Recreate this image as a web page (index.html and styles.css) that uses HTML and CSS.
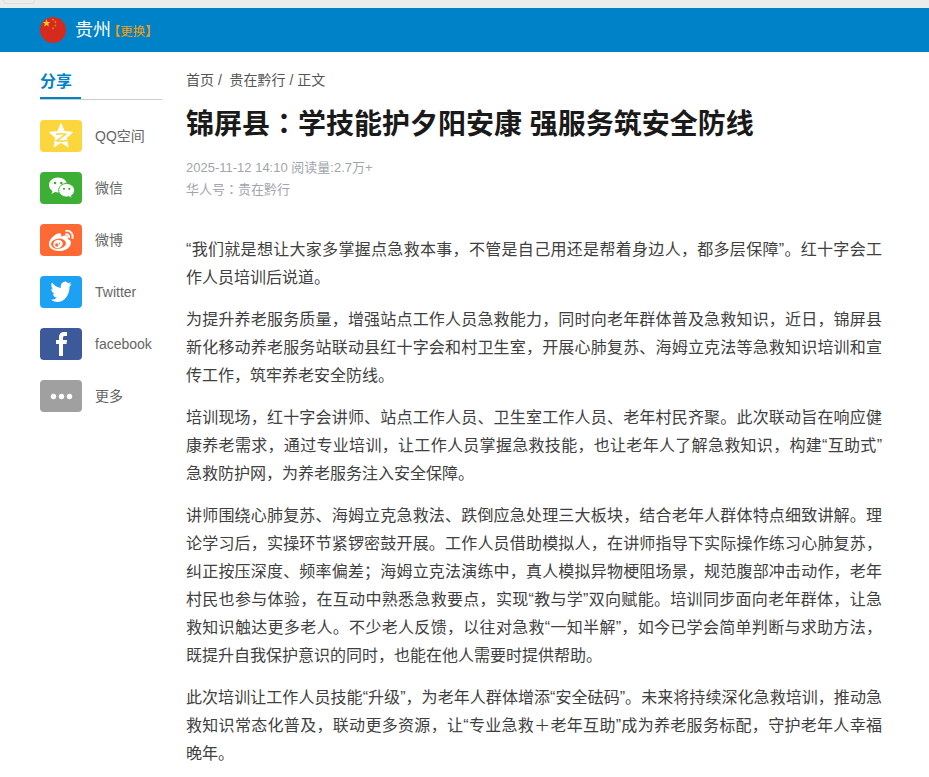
FILE: index.html
```
<!DOCTYPE html>
<html lang="zh-CN">
<head>
  <meta charset="UTF-8">
  <meta name="viewport" content="width=device-width, initial-scale=1.0">
  <title>锦屏县：学技能护夕阳安康 强服务筑安全防线</title>
  <link rel="stylesheet" href="styles.css">
</head>
<body>
  <div class="top-strip"><div class="top-tab"></div></div>
  <header class="header">
    <svg class="flag" viewBox="0 0 26 26">
      <circle cx="13" cy="13" r="13" fill="#d52b1e"/>
      <path fill="#f8c51c" d="M6.500 2.300l1.100 2.600 2.800.2-2.200 1.700.8 2.700-2.500-1.500-2.300 1.500.7-2.700-2.200-1.700 2.800-.2z"/>
      <g fill="#e8931c">
        <circle cx="13" cy="2.600" r=".9"/>
        <circle cx="15.400" cy="5" r=".9"/>
        <circle cx="15.400" cy="8.600" r=".9"/>
        <circle cx="13" cy="11.300" r=".9"/>
      </g>
    </svg>
    <span class="city">贵州</span>
    <a class="change">【更换】</a>
  </header>

  <div class="main">
    <aside class="share">
      <div class="share-title"><span>分享</span></div>
      <ul class="share-list">
        <li>
          <svg class="icon qzone" viewBox="0 0 42 32">
            <path fill="#fff" stroke="#fff" stroke-width="1" stroke-linejoin="round" d="M21 3.500l3.300 8 8.200.8-6.200 5.600 1.800 9-7.100-4.600-7.100 4.600 1.800-9-6.200-5.600 8.200-.8z"/>
            <path fill="none" stroke="#fbd63c" stroke-width="1.500" d="M15.800 14.300q5-1 9.800 0l-8.800 6.400q5 1 10.400-.3"/>
          </svg>
          <span>QQ空间</span>
        </li>
        <li>
          <svg class="icon wechat" viewBox="0 0 42 32">
            <path fill="#fff" d="M18 5.500c-5 0-9 3.300-9 7.400 0 2.400 1.300 4.400 3.400 5.800l-.8 3.200 3.300-1.900c1 .3 2 .4 3.100.4 5 0 9-3.300 9-7.500s-4-7.400-9-7.400z"/>
            <path fill="#fff" stroke="#3eaf35" stroke-width="1" d="M26.600 11.500c-4.400 0-7.900 3-7.900 6.700s3.500 6.800 7.900 6.800c.9 0 1.700-.1 2.500-.3l3 1.900-.7-2.900c1.900-1.200 3.100-3.200 3.100-5.500 0-3.700-3.500-6.700-7.900-6.700z"/>
            <g fill="#3eaf35">
              <circle cx="15" cy="11" r="1.300"/>
              <circle cx="21.300" cy="11" r="1.300"/>
              <circle cx="24" cy="16.800" r="1.100"/>
              <circle cx="29.300" cy="16.800" r="1.100"/>
            </g>
          </svg>
          <span>微信</span>
        </li>
        <li>
          <svg class="icon weibo" viewBox="0 0 42 32">
            <path fill="#fff" d="M19.600 9.200c1.800.1 2 1.600 1.400 3.500 3-1.300 6.600-1.800 7 .4.1.8-.1 1.400-.3 2 2.300.7 3.600 2 3.200 4.300-.7 4.200-5.500 7.600-12 7.600-5.600 0-10-2.600-10-6.900 0-4.800 6.500-11 10.700-10.900z"/>
            <ellipse cx="18.500" cy="19.700" rx="7.500" ry="5.100" fill="#ff6933" transform="rotate(-8 18.500 19.700)"/>
            <ellipse cx="18" cy="20" rx="4.800" ry="4.100" fill="#fff" transform="rotate(-18 18 20)"/>
            <circle cx="16.800" cy="21" r="1.700" fill="#ff6933"/>
            <circle cx="19.500" cy="19.300" r=".7" fill="#ff6933"/>
            <path fill="none" stroke="#fff" stroke-width="1.800" stroke-linecap="round" d="M26 6.800c4-.8 7.700 3 6.500 7.400M26 10.300c2.200-.4 3.600 1.300 3.100 3.100"/>
          </svg>
          <span>微博</span>
        </li>
        <li>
          <svg class="icon twitter" viewBox="0 0 42 32">
            <path fill="#fff" transform="translate(10.500 3.300) scale(.88 1.040)" d="M23.950 4.570a10 10 0 0 1-2.820.77 4.960 4.960 0 0 0 2.160-2.720 9.900 9.900 0 0 1-3.120 1.180 4.920 4.920 0 0 0-8.380 4.480C7.690 8.100 4.070 6.130 1.640 3.160a4.820 4.820 0 0 0-.67 2.480c0 1.710.87 3.210 2.190 4.100a4.900 4.900 0 0 1-2.230-.62v.06a4.920 4.920 0 0 0 3.950 4.830 5 5 0 0 1-2.210.08 4.940 4.940 0 0 0 4.600 3.420A9.870 9.870 0 0 1 0 19.540a14 14 0 0 0 7.550 2.210c9.050 0 14-7.500 14-13.980 0-.21 0-.42-.02-.63a9.940 9.940 0 0 0 2.460-2.550z"/>
          </svg>
          <span>Twitter</span>
        </li>
        <li>
          <svg class="icon facebook" viewBox="0 0 42 32">
            <path fill="#fff" d="M19 28V16h-3v-4h3V9.500C19 5.800 21 4 24.200 4H27v4h-2c-1.500 0-2 .6-2 2v2h4l-.5 4H23v12z"/>
          </svg>
          <span>facebook</span>
        </li>
        <li>
          <svg class="icon more" viewBox="0 0 42 32">
            <g fill="#fff">
              <circle cx="13.500" cy="16.500" r="2.700"/>
              <circle cx="21.500" cy="16.500" r="2.700"/>
              <circle cx="29.500" cy="16.500" r="2.700"/>
            </g>
          </svg>
          <span>更多</span>
        </li>
      </ul>
    </aside>

    <article class="article">
      <div class="crumbs">首页 /&nbsp; 贵在黔行 / 正文</div>
      <h1>锦屏县<span class="colon" lang="ja">：</span>学技能护夕阳安康 强服务筑安全防线</h1>
      <div class="meta">
        <div>2025-11-12 14:10 阅读量:2.7万+</div>
        <div>华人号<span class="colon" lang="ja">：</span>贵在黔行</div>
      </div>
      <div class="content">
        <p>“我们就是想让大家多掌握点急救本事，不管是自己用还是帮着身边人，都多层保障”。红十字会工作人员培训后说道。</p>
        <p>为提升养老服务质量，增强站点工作人员急救能力，同时向老年群体普及急救知识，近日，锦屏县新化移动养老服务站联动县红十字会和村卫生室，开展心肺复苏、海姆立克法等急救知识培训和宣传工作，筑牢养老安全防线。</p>
        <p>培训现场，红十字会讲师、站点工作人员、卫生室工作人员、老年村民齐聚。此次联动旨在响应健康养老需求，通过专业培训，让工作人员掌握急救技能，也让老年人了解急救知识，构建“互助式”急救防护网，为养老服务注入安全保障。</p>
        <p>讲师围绕心肺复苏、海姆立克急救法、跌倒应急处理三大板块，结合老年人群体特点细致讲解。理论学习后，实操环节紧锣密鼓开展。工作人员借助模拟人，在讲师指导下实际操作练习心肺复苏，纠正按压深度、频率偏差；海姆立克法演练中，真人模拟异物梗阻场景，规范腹部冲击动作，老年村民也参与体验，在互动中熟悉急救要点，实现“教与学”双向赋能。培训同步面向老年群体，让急救知识触达更多老人。不少老人反馈，以往对急救“一知半解”，如今已学会简单判断与求助方法，既提升自我保护意识的同时，也能在他人需要时提供帮助。</p>
        <p>此次培训让工作人员技能“升级”，为老年人群体增添“安全砝码”。未来将持续深化急救培训，推动急救知识常态化普及，联动更多资源，让“专业急救＋老年互助”成为养老服务标配，守护老年人幸福晚年。</p>
      </div>
    </article>
  </div>
</body>
</html>
```
FILE: styles.css
```
* {
  margin: 0;
  padding: 0;
  box-sizing: border-box;
}

body {
  font-family: "Liberation Sans", "Noto Sans CJK SC", sans-serif;
  color: #404040;
  background: #fff;
  height: 777px;
  overflow: hidden;
  text-spacing-trim: space-all;
}

.top-strip {
  height: 8px;
  padding-left: 3px;
  background: #ececec;
}

.top-tab {
  width: 32px;
  height: 4px;
  border: 1px solid #dfdfdf;
  border-top: 0;
  border-radius: 0 0 4px 4px;
}

.header {
  display: flex;
  align-items: center;
  height: 44px;
  padding-left: 40px;
  background: #0082c8;
}

.flag {
  width: 26px;
  height: 26px;
}

.city {
  margin-left: 9px;
  font-size: 18px;
  line-height: 44px;
  color: #fff;
}

/* halt drops the empty half of the full-width brackets */
.change {
  margin-left: 3px;
  padding-top: 1px;
  font-size: 12.5px;
  font-feature-settings: "halt";
  color: #ff9c00;
}

.main {
  display: flex;
  padding-left: 40px;
}

.share {
  width: 122px;
  margin-right: 24px;
  flex-shrink: 0;
}

.share-title {
  height: 48px;
  border-bottom: 1px solid #ccc;
  font-size: 16px;
  font-weight: bold;
  line-height: 59px;
  color: #0082c8;
}

.share-title span {
  display: block;
  width: 41px;
  height: 47px;
  border-bottom: 2px solid #0082c8;
}

.share-list {
  list-style: none;
  padding-top: 20px;
}

.share-list li {
  display: flex;
  align-items: center;
  height: 32px;
  margin-bottom: 20px;
  font-size: 14px;
  line-height: 32px;
  color: #666;
}

.icon {
  width: 42px;
  height: 32px;
  margin-right: 13px;
  border-radius: 4px;
}

.qzone { background: #fbd63c; }
.wechat { background: #3eaf35; }
.weibo { background: #ff6933; }
.twitter { background: #1da1f2; }
.facebook { background: #3c5a9a; }
.more { background: #a0a0a0; }

.article {
  width: 696px;
}

.crumbs {
  padding-top: 18px;
  font-size: 14px;
  line-height: 20px;
  color: #555;
}

h1 {
  margin-top: 12px;
  font-size: 28px;
  line-height: 40px;
  color: #1a1a1a;
  white-space: nowrap;
}

.colon {
  font-family: "Noto Sans CJK JP", sans-serif;
}

.meta {
  margin-top: 13px;
  font-size: 13px;
  line-height: 20px;
  color: #a0a6ab;
}

.meta div {
  height: 21px;
}

.content {
  margin-top: 36px;
  font-size: 16px;
  line-height: 28px;
  text-align: justify;
}

.content p {
  margin-bottom: 14px;
}
```
